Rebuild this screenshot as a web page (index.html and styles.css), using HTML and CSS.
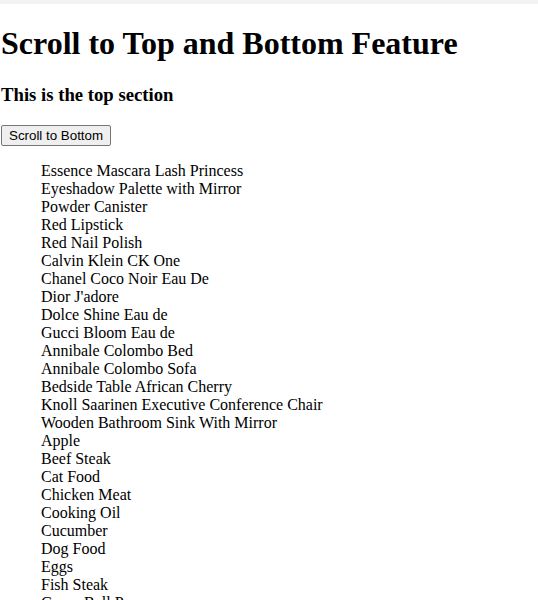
FILE: index.html
```html
<!DOCTYPE html>
<html>
<head>
<meta charset="utf-8">
<link rel="stylesheet" href="styles.css">
</head>
<body>
<div class="topbar"></div>
<div class="page">
<h1 class="title">Scroll to Top and Bottom Feature</h1>
<h3 class="subtitle">This is the top section</h3>
<div class="actions"><button class="btn">Scroll to Bottom</button></div>
<ul class="products">
<li>Essence Mascara Lash Princess</li>
<li>Eyeshadow Palette with Mirror</li>
<li>Powder Canister</li>
<li>Red Lipstick</li>
<li>Red Nail Polish</li>
<li>Calvin Klein CK One</li>
<li>Chanel Coco Noir Eau De</li>
<li>Dior J'adore</li>
<li>Dolce Shine Eau de</li>
<li>Gucci Bloom Eau de</li>
<li>Annibale Colombo Bed</li>
<li>Annibale Colombo Sofa</li>
<li>Bedside Table African Cherry</li>
<li>Knoll Saarinen Executive Conference Chair</li>
<li>Wooden Bathroom Sink With Mirror</li>
<li>Apple</li>
<li>Beef Steak</li>
<li>Cat Food</li>
<li>Chicken Meat</li>
<li>Cooking Oil</li>
<li>Cucumber</li>
<li>Dog Food</li>
<li>Eggs</li>
<li>Fish Steak</li>
<li>Green Bell Pepper</li>
<li>Green Chili Pepper</li>
<li>Honey Jar</li>
<li>Ice Cream</li>
<li>Juice</li>
<li>Kiwi</li>
</ul>
</div>
</body>
</html>
```
FILE: styles.css
```css
html, body {
  margin: 0;
  padding: 0;
  background: #ffffff;
}
body {
  font-family: "Liberation Serif", "Times New Roman", serif;
  color: #000;
}
.topbar {
  height: 4px;
  background: #f1f2f4;
}
.page {
  padding-left: 1px;
}
.title {
  font-size: 32px;
  font-weight: bold;
  margin: 21.44px 0;
}
.subtitle {
  font-size: 18.72px;
  font-weight: bold;
  margin: 18.72px 0;
}
.actions {
  margin: 0;
}
.btn {
  font-family: "Liberation Sans", Arial, sans-serif;
  font-size: 13.33px;
  color: #000;
  background: #efefef;
  border: 1px solid #767676;
  border-radius: 2px;
  padding: 1px 7px;
  height: 21px;
  line-height: 15px;
}
.products {
  list-style: none;
  margin: 16px 0;
  padding-left: 40px;
  font-size: 16px;
}
.products li {
  line-height: 18px;
}
```
